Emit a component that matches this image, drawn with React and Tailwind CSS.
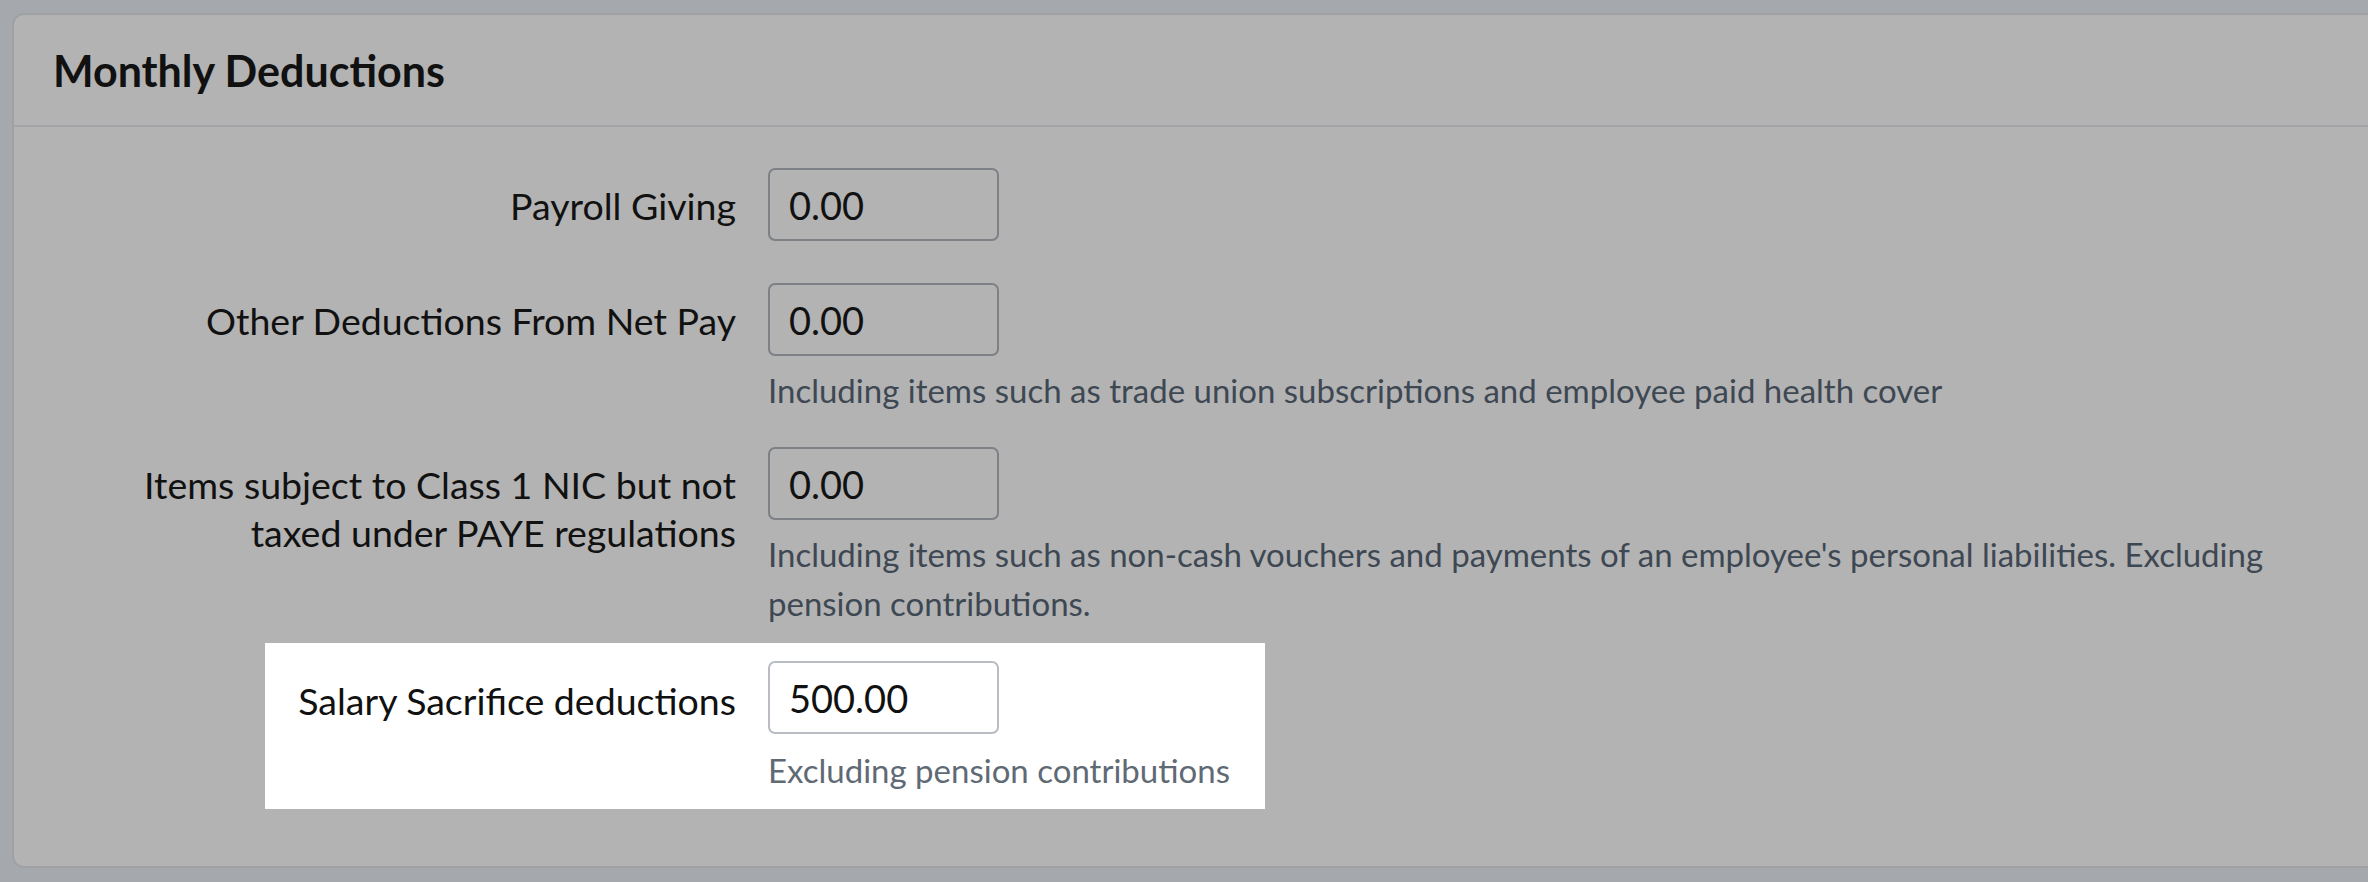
import { useState } from 'react';

const rows = [
  { id: 'payroll', label: ['Payroll Giving'], value: '0.00', mt: 'mt-[41px]' },
  {
    id: 'other',
    label: ['Other Deductions From Net Pay'],
    value: '0.00',
    help: 'Including items such as trade union subscriptions and employee paid health cover',
    mt: 'mt-[42px]',
  },
  {
    id: 'nic',
    label: ['Items subject to Class 1 NIC but not', 'taxed under PAYE regulations'],
    value: '0.00',
    help: "Including items such as non-cash vouchers and payments of an employee's personal liabilities. Excluding pension contributions.",
    mt: 'mt-[32px]',
  },
];

const Field = ({ value, onChange, active }) => (
  <input
    type="text"
    value={value}
    onChange={(e) => onChange(e.target.value)}
    className={`h-[73px] w-[231px] rounded-[7px] border-2 px-[19px] text-[38px] text-[#111] outline-none ${
      active ? 'border-[#b9bdc3] bg-white' : 'border-[#7d8186] bg-[#b3b3b3]'
    }`}
  />
);

const Row = ({ row, value, onChange }) => (
  <div className={`flex items-start gap-[32px] ${row.mt}`}>
    <label className="w-[722px] shrink-0 pt-[14px] text-right text-[37.5px] leading-[48px] text-[#111]">
      {row.label.map((line) => (
        <span key={line} className="block">{line}</span>
      ))}
    </label>
    <div className="w-[1500px]">
      <Field value={value} onChange={onChange} />
      {row.help && (
        <p className="mt-[10px] text-[33px] leading-[49px] text-[#3e4853]">{row.help}</p>
      )}
    </div>
  </div>
);

export default function App() {
  const [values, setValues] = useState({ payroll: '0.00', other: '0.00', nic: '0.00', salary: '500.00' });
  const setValue = (id) => (v) => setValues((prev) => ({ ...prev, [id]: v }));

  return (
    <div
      className="h-[882px] w-[2368px] overflow-hidden bg-[#a5a8ad] pt-[13px] pl-[12px]"
      style={{ fontFamily: 'Lato, "Open Sans", sans-serif' }}
    >
      <div className="h-[855px] w-[2400px] rounded-tl-[12px] rounded-bl-[12px] border-2 border-r-0 border-[#9fa1a5] bg-[#b3b3b3]">
        {/* Header */}
        <div className="flex h-[112px] items-center border-b-2 border-[#a3a3a8] px-[39px]">
          <h2 className="pt-[2px] text-[43px] font-bold text-[#111]">Monthly Deductions</h2>
        </div>

        {/* Rows */}
        <div className="flex flex-col">
          {rows.map((row) => (
            <Row key={row.id} row={row} value={values[row.id]} onChange={setValue(row.id)} />
          ))}

          {/* Highlighted row */}
          <div className="mt-[15px] ml-[251px] flex w-[1000px] items-start gap-[32px] bg-white pt-[18px] pb-[14px]">
            <label className="w-[471px] shrink-0 pt-[16px] text-right text-[37.5px] leading-[48px] text-[#111]">
              Salary Sacrifice deductions
            </label>
            <div>
              <Field value={values.salary} onChange={setValue('salary')} active />
              <p className="mt-[12px] text-[33px] leading-[49px] text-[#5f6a75]">Excluding pension contributions</p>
            </div>
          </div>
        </div>
      </div>
    </div>
  );
}
